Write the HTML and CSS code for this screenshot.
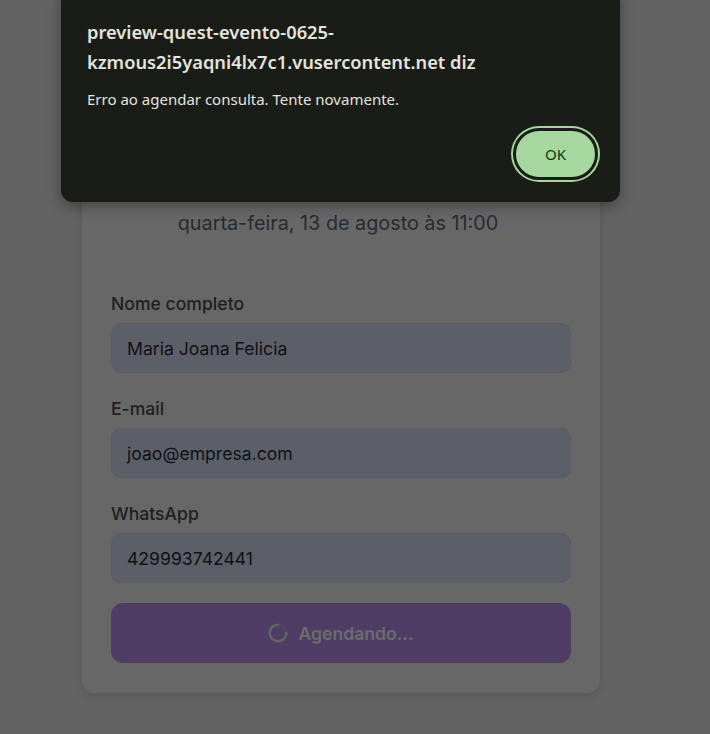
FILE: index.html
```html
<!DOCTYPE html>
<html lang="pt-BR">
<head>
<meta charset="utf-8">
<title>Agendar consulta</title>
<link rel="stylesheet" href="styles.css">
</head>
<body>
<main class="page">
  <section class="card">
    <header class="card-head">
      <h1 class="card-title">Confirme seu agendamento</h1>
      <p class="card-sub">Preencha seus dados abaixo</p>
    </header>
    <p class="slot">quarta-feira, 13 de agosto às 11:00</p>
    <form class="form">
      <div class="field">
        <label class="label">Nome completo</label>
        <div class="input">Maria Joana Felicia</div>
      </div>
      <div class="field">
        <label class="label">E-mail</label>
        <div class="input">joao@empresa.com</div>
      </div>
      <div class="field">
        <label class="label">WhatsApp</label>
        <div class="input">429993742441</div>
      </div>
      <button type="button" class="submit">
        <svg class="spinner" width="20" height="20" viewBox="0 0 24 24" fill="none">
          <circle cx="12" cy="12" r="10" stroke="currentColor" stroke-width="3" opacity="0.15"/>
          <path d="M12 2 A10 10 0 1 0 22 12" stroke="currentColor" stroke-width="3" stroke-linecap="round"/>
        </svg>
        <span>Agendando...</span>
      </button>
    </form>
  </section>
</main>

<div class="dialog" role="alertdialog">
  <h2 class="dialog-title">preview-quest-evento-0625-kzmous2i5yaqni4lx7c1.vusercontent.net diz</h2>
  <p class="dialog-msg">Erro ao agendar consulta. Tente novamente.</p>
  <div class="dialog-actions">
    <button type="button" class="ok">OK</button>
  </div>
</div>
</body>
</html>
```

FILE: styles.css
```css
* { box-sizing: border-box; }

html, body {
  margin: 0;
  padding: 0;
  background: #636363;
  height: 100%;
  overflow: hidden;
}

body {
  font-family: Inter, "Noto Sans", sans-serif;
}

.page {
  width: 682px;
  display: flex;
  justify-content: center;
  padding-top: 100px;
}

.card {
  width: 518px;
  background: #676767;
  border-radius: 12px;
  box-shadow: 0 2px 8px rgba(0, 0, 0, 0.12);
  padding: 29px 29px 30px;
}

.card-head {
  height: 80px;
  text-align: center;
}

.card-title {
  margin: 0 0 8px;
  font-size: 24px;
  line-height: 32px;
  color: #222;
}

.card-sub {
  margin: 0;
  font-size: 16px;
  line-height: 24px;
  color: #333;
}

.slot {
  margin: 0;
  text-align: center;
  font-size: 19.8px;
  line-height: 28px;
  color: #272b32;
  padding-right: 6px;
}

.form {
  margin-top: 55px;
  display: flex;
  flex-direction: column;
  gap: 24px;
}

.field {
  display: flex;
  flex-direction: column;
  gap: 7px;
}

.label {
  font-size: 17.6px;
  line-height: 24px;
  font-weight: 500;
  color: #202020;
}

.input {
  height: 50px;
  border: 1px solid #595c64;
  border-radius: 10px;
  background: #5c5f68;
  padding: 0 15px;
  display: flex;
  align-items: center;
  font-size: 17.6px;
  color: #101115;
}

.submit {
  margin-top: -4px;
  height: 60px;
  border: 0;
  border-radius: 12px;
  background: #4f3d66;
  display: flex;
  align-items: center;
  justify-content: center;
  gap: 10px;
  font-family: Inter, sans-serif;
  font-size: 17.6px;
  font-weight: 600;
  color: #6c6c6c;
}

.spinner {
  color: #646464;
}

.dialog {
  position: absolute;
  left: 61px;
  top: -12px;
  width: 559px;
  background: #191c17;
  border-radius: 12px;
  box-shadow: 0 4px 14px rgba(0, 0, 0, 0.35);
  padding: 29px 20px 22px 26px;
  font-family: "Noto Sans", sans-serif;
}

.dialog-title {
  margin: 0;
  font-size: 18.3px;
  line-height: 30px;
  font-weight: 600;
  color: #e3e4dd;
  padding-right: 20px;
}

.dialog-msg {
  margin: 12px 0 0;
  font-size: 15px;
  line-height: 20px;
  color: #e3e4dd;
}

.dialog-actions {
  margin-top: 19px;
  display: flex;
  justify-content: flex-end;
  padding-right: 2px;
}

.ok {
  width: 85px;
  height: 52px;
  margin: 0;
  border: 3px solid #191c17;
  border-radius: 26px;
  background: #a5d79e;
  box-shadow: 0 0 0 2px #a5d79e;
  font-family: "Noto Sans", sans-serif;
  font-size: 15px;
  color: #0e3a14;
}
```
